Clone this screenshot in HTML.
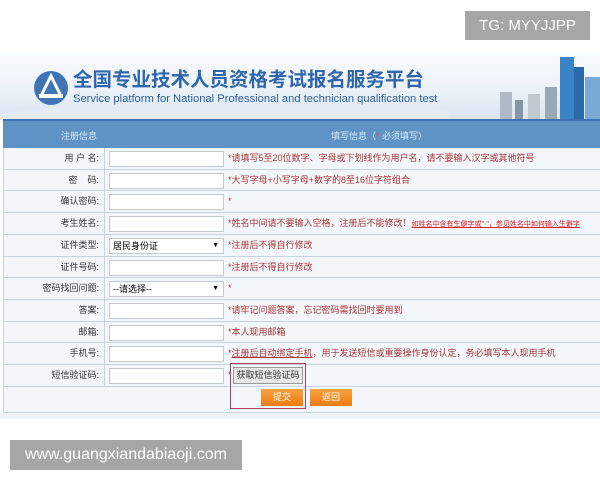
<!DOCTYPE html>
<html><head><meta charset="utf-8"><style>
*{margin:0;padding:0;box-sizing:border-box}
body{width:600px;height:480px;background:#fff;position:relative;overflow:hidden;font-family:"Liberation Sans","Noto Sans CJK SC",sans-serif}
.abs{position:absolute}
.hdr{left:0;top:52px;width:600px;height:68px;background:linear-gradient(180deg,#fafcfe 0%,#eef4fa 45%,#dbe6f1 100%)}
.bar{left:3px;top:119px;width:597px;height:29px;background:#5f93c6;border-top:2px solid #3f73b0;color:#dbe8f5;font-size:9px}
.tbl{position:absolute;left:3px;top:148px;width:597px;border-left:1px solid #c6d4e2}
.row{position:relative;width:100%;height:21.73px;border-bottom:1px solid #c6d4e2;background:#f3f7fb;font-size:9px}
.lab{position:absolute;left:0;width:101px;top:0;height:100%;border-right:1px solid #c6d4e2;text-align:right;padding-right:5px;line-height:21px;color:#333}
.inp{position:absolute;left:105px;top:3px;width:115px;height:16px;background:#fff;border:1px solid #c3c9cf}
.hint{position:absolute;left:224px;top:0;line-height:21px;color:#a33;white-space:nowrap}
.btn{background:linear-gradient(#f9a040,#ec7c10);color:#fff;font-size:9px;text-align:center;line-height:16px;height:17px;width:42px}
.wm{background:#a6a6a6;color:#fff}
</style></head><body>
<div class="abs hdr"></div>
<svg class="abs" style="left:0;top:52px" width="600" height="68">
<path d="M0 62 Q200 35 450 58 L450 68 L0 68Z" fill="#e3ecf5"/>
<circle cx="51" cy="36" r="17" fill="#3f74b5"/>
<path d="M41 44 L51 24 L61 44" stroke="#fff" stroke-width="3" fill="none"/>
<rect x="39" y="42" width="24" height="4" fill="#fff"/>
<rect x="560" y="5" width="14" height="63" fill="#3a83c7"/>
<rect x="574" y="15" width="10" height="53" fill="#2a6aa8"/>
<rect x="585" y="25" width="15" height="43" fill="#7aa9d4"/>
<rect x="545" y="35" width="12" height="33" fill="#9aa7b5"/>
<rect x="500" y="40" width="12" height="28" fill="#b0bac4"/>
<rect x="515" y="48" width="8" height="20" fill="#8895a3"/>
<rect x="528" y="42" width="12" height="26" fill="#c0c8d0"/>
</svg>
<div class="abs" style="left:73px;top:69px;font-size:19.5px;line-height:22px;font-weight:bold;color:#2f66ad;white-space:nowrap">全国专业技术人员资格考试报名服务平台</div>
<div class="abs" style="left:73px;top:93px;font-size:11.2px;line-height:12px;color:#2f5f9a;white-space:nowrap">Service platform for National Professional and technician qualification test</div>
<div class="abs bar"><span class="abs" style="left:58px;top:8px">注册信息</span><span class="abs" style="left:328px;top:8px">填写信息（<span style="color:#e44">*</span> 必须填写）</span></div>

<div class="tbl">
<div class="row"><div class="lab">用 户 名:</div><div class="inp"></div><div class="hint">*请填写5至20位数字、字母或下划线作为用户名，请不要输入汉字或其他符号</div></div>
<div class="row"><div class="lab">密&nbsp;&nbsp;&nbsp;&nbsp;码:</div><div class="inp"></div><div class="hint">*大写字母+小写字母+数字的8至16位字符组合</div></div>
<div class="row"><div class="lab">确认密码:</div><div class="inp"></div><div class="hint">*</div></div>
<div class="row"><div class="lab">考生姓名:</div><div class="inp"></div><div class="hint">*姓名中间请不要输入空格，注册后不能修改！<span style="font-size:7px;color:#d22;text-decoration:underline">如姓名中含有生僻字或"·"，参见姓名中如何输入生僻字</span></div></div>
<div class="row"><div class="lab">证件类型:</div><div class="inp" style="padding-left:3px;line-height:14px">居民身份证<span style="position:absolute;right:4px;font-size:7px">▼</span></div><div class="hint">*注册后不得自行修改</div></div>
<div class="row"><div class="lab">证件号码:</div><div class="inp"></div><div class="hint">*注册后不得自行修改</div></div>
<div class="row"><div class="lab">密码找回问题:</div><div class="inp" style="padding-left:3px;line-height:14px">--请选择--<span style="position:absolute;right:4px;font-size:7px">▼</span></div><div class="hint">*</div></div>
<div class="row"><div class="lab">答案:</div><div class="inp"></div><div class="hint">*请牢记问题答案，忘记密码需找回时要用到</div></div>
<div class="row"><div class="lab">邮箱:</div><div class="inp"></div><div class="hint">*本人现用邮箱</div></div>
<div class="row"><div class="lab">手机号:</div><div class="inp"></div><div class="hint">*<u>注册后自动绑定手机</u>，用于发送短信或重要操作身份认定，务必填写本人现用手机</div></div>
<div class="row"><div class="lab">短信验证码:</div><div class="inp"></div><div class="hint">*</div></div>
<div class="row" style="height:26px"></div>
</div>
<div class="abs" style="left:233px;top:367px;width:70px;height:17px;background:#e8e8e8;border:1px solid #999;font-size:9px;line-height:15px;text-align:center;color:#333">获取短信验证码</div>
<div class="abs btn" style="left:261px;top:389px">提交</div>
<div class="abs btn" style="left:310px;top:389px">返回</div>
<div class="abs" style="left:230px;top:363px;width:76px;height:46px;border:1px solid #b04060"></div>
<div class="abs" style="left:0;top:413px;width:600px;height:6px;background:#eef2f6"></div>

<div class="abs wm" style="left:465px;top:11px;width:125px;height:29px;font-size:15px;line-height:29px;text-align:center">TG: MYYJJPP</div>
<div class="abs wm" style="left:10px;top:440px;width:232px;height:30px;font-size:16px;line-height:30px;text-align:center">www.guangxiandabiaoji.com</div>
</body></html>
